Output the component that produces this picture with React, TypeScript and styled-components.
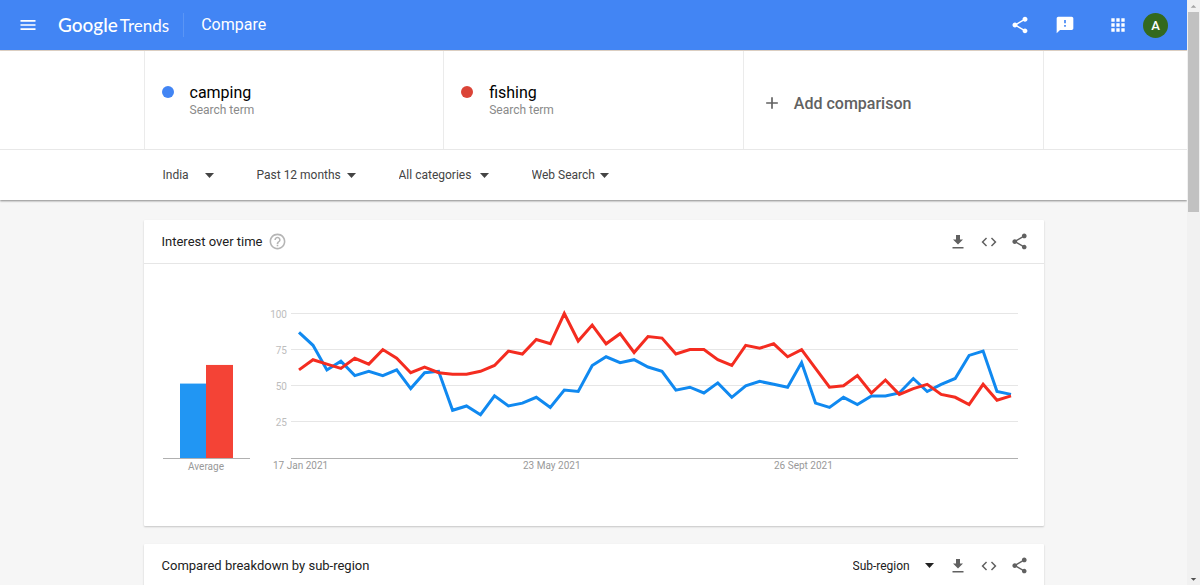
import React from "react";
import styled, { createGlobalStyle } from "styled-components";
import { MdMenu, MdShare, MdFeedback, MdApps, MdCode, MdHelpOutline, MdAdd } from "react-icons/md";

const GlobalStyle = createGlobalStyle`
  *, *::before, *::after { box-sizing: border-box; }
  body {
    margin: 0;
    background: #f6f6f6;
    color: #212121;
    font-family: Roboto, "Liberation Sans", sans-serif;
    font-size: 13px;
  }
  button, select { font: inherit; color: inherit; }
`;

const Shell = styled.div`
  display: flex;
  height: 100vh;
  overflow: hidden;
`;

const Page = styled.div`
  flex: 1;
  min-width: 0;
  overflow-y: auto;
  scrollbar-width: none;
`;

const ScrollTrack = styled.div`
  flex: 0 0 13px;
  display: flex;
  flex-direction: column;
  align-items: stretch;
  padding: 0 1px;
  background: #f1f1f1;
`;

const ScrollThumb = styled.div`
  height: 200px;
  background: #c1c1c1;
`;

const ScrollArrow = styled.svg<{ $end?: boolean }>`
  width: 11px;
  height: 12px;
  fill: ${(p) => (p.$end ? "#505050" : "#a3a3a3")};
  margin-top: ${(p) => (p.$end ? "auto" : "0")};
`;

const TopBar = styled.header`
  display: flex;
  align-items: center;
  height: 51px;
  padding: 0 19px 0 18px;
  background: #4285f4;
  border-bottom: 1px solid #e3d5c8;
  color: #fff;
`;

const IconButton = styled.button<{ $size: number }>`
  display: inline-flex;
  align-items: center;
  justify-content: center;
  width: ${(p) => p.$size}px;
  height: ${(p) => p.$size}px;
  padding: 0;
  border: 0;
  background: none;
  cursor: pointer;
`;

const Logo = styled.a`
  display: flex;
  align-items: baseline;
  gap: 2px;
  margin-left: 20px;
  color: #fff;
  font-family: Lato, sans-serif;
  font-size: 19px;
  line-height: 24px;
  text-decoration: none;
`;

const LogoBrand = styled.span`
  font-weight: 500;
`;

const LogoProduct = styled.span`
  font-size: 17px;
`;

const PageTitle = styled.h1`
  margin: 0 0 0 14px;
  padding: 0 0 0 17px;
  border-left: 1px solid #5a95f5;
  font-size: 16px;
  font-weight: 400;
  line-height: 24px;
`;

const TopActions = styled.div`
  display: flex;
  align-items: center;
  gap: 21px;
  margin-left: auto;
`;

const AppsGroup = styled.div`
  display: flex;
  align-items: center;
  gap: 13px;
  margin-left: 8px;
`;

const Avatar = styled.button`
  width: 25px;
  height: 25px;
  padding: 0;
  border: 0;
  border-radius: 50%;
  background: #33691e;
  color: #fff;
  font-size: 13px;
  font-weight: 500;
  line-height: 25px;
`;

const Controls = styled.section`
  background: #fff;
  box-shadow: 0 1px 2px rgba(0, 0, 0, 0.45);
`;

const Band = styled.div`
  border-bottom: 1px solid #e8e8e8;
`;

const Container = styled.div`
  width: 100%;
  max-width: 900px;
  margin: 0 auto;
`;

const Terms = styled(Container)`
  display: grid;
  grid-template-columns: repeat(3, 1fr);
  height: 98px;
  border-right: 1px solid #ebebeb;
`;

const Term = styled.div`
  display: grid;
  grid-template-columns: 12px 1fr;
  column-gap: 16px;
  align-content: start;
  align-items: center;
  padding: 30px 17px 0;
  border-left: 1px solid #ebebeb;
`;

const Dot = styled.span<{ $color: string }>`
  width: 12px;
  height: 12px;
  border-radius: 50%;
  background: ${(p) => p.$color};
`;

const TermName = styled.span`
  padding-top: 2px;
  color: #000;
  font-size: 16px;
  line-height: 20px;
`;

const TermKind = styled.span`
  grid-column: 2;
  color: #8a8a8a;
  font-size: 12px;
  line-height: 14px;
`;

const AddButton = styled.button`
  display: flex;
  align-items: center;
  gap: 12px;
  padding: 6px 18px 0;
  border: 0;
  border-left: 1px solid #ebebeb;
  background: none;
  color: #616161;
  font-size: 16px;
  font-weight: 500;
  cursor: pointer;
`;

const Filters = styled(Container)`
  display: flex;
  align-items: center;
  gap: 43px;
  height: 50px;
  padding: 0 19px;
  color: #444;
`;

const SelectBox = styled.label<{ $width: number }>`
  display: grid;
  grid-template-columns: 1fr 9px;
  align-items: center;
  width: ${(p) => p.$width}px;
  font-size: 12px;
`;

const Select = styled.select`
  grid-area: 1 / 1 / 2 / 3;
  width: 100%;
  height: 24px;
  padding: 0;
  border: 0;
  background: none;
  appearance: none;
`;

const Caret = styled.svg`
  grid-area: 1 / 2 / 2 / 3;
  width: 9px;
  height: 5px;
  fill: currentColor;
  pointer-events: none;
`;

const Cards = styled(Container).attrs({ as: "main" })`
  display: flex;
  flex-direction: column;
  gap: 18px;
  padding: 20px 0;
`;

const Card = styled.section`
  background: #fff;
  border-radius: 1px;
  box-shadow: 0 1px 2px rgba(0, 0, 0, 0.2);
`;

const CardHeader = styled.header`
  display: flex;
  align-items: center;
  height: 44px;
  padding: 0 14px 0 18px;
  border-bottom: 1px solid #e6e6e6;
`;

const CardTitle = styled.h2`
  margin: 0 5px 0 0;
  font-size: 13px;
  font-weight: 400;
  line-height: 20px;
`;

const CardActions = styled.div`
  display: flex;
  align-items: center;
  gap: 11px;
  margin-left: auto;
  color: #616161;
`;

const RegionSelect = styled.div`
  margin-right: 3px;
  color: #212121;
`;

const ChartBody = styled.div`
  display: flex;
  align-items: flex-start;
  padding: 40px 24px 54px 18px;
`;

const AverageChart = styled.svg`
  flex: 0 0 108px;
  width: 108px;
  height: 168px;
`;

const LineChart = styled.svg`
  flex: 1;
  min-width: 0;
  height: auto;
`;

const AxisText = styled.text<{ $tone?: string }>`
  font-size: 10px;
  fill: ${(p) => p.$tone ?? "#999"};
`;

const EmptyMap = styled.div`
  height: 320px;
`;

const camping = [
  87, 78, 61, 67, 57, 60, 57, 61, 48, 59, 60, 33, 36, 30, 43, 36, 38, 42, 35, 47, 46, 64, 70, 66, 68, 63, 60, 47, 49, 45,
  52, 42, 50, 53, 51, 49, 66, 38, 35, 42, 37, 43, 43, 45, 55, 46, 51, 55, 71, 74, 46, 44,
];
const fishing = [
  61, 68, 65, 62, 69, 65, 75, 69, 59, 63, 59, 58, 58, 60, 64, 74, 72, 82, 79, 100, 81, 92, 79, 86, 73, 84, 83, 72, 75, 75,
  68, 64, 78, 76, 79, 70, 75, 62, 49, 50, 57, 45, 54, 44, 48, 51, 44, 42, 37, 51, 40, 43,
];

const BASE = 154;
const SCALE = 1.445;
const yOf = (v: number) => BASE - v * SCALE;
const toPoints = (data: number[]) =>
  data.map((v, i) => `${(29 + (i * 712) / 51).toFixed(1)},${yOf(v).toFixed(1)}`).join(" ");

function DownloadIcon() {
  return (
    <svg width="12" height="14" viewBox="0 0 12 14" fill="currentColor" aria-hidden="true">
      <path d="M4 0h4v4.500h3L6 9.500 1 4.500h3zM0.500 12h11v1.500h-11z" />
    </svg>
  );
}

function Dropdown({ label, value, width }: { label: string; value: string; width: number }) {
  return (
    <SelectBox $width={width}>
      <Select aria-label={label} defaultValue={value}>
        <option>{value}</option>
      </Select>
      <Caret viewBox="0 0 9 5" aria-hidden="true">
        <path d="M0 0h9L4.500 5z" />
      </Caret>
    </SelectBox>
  );
}

function ExportButtons() {
  return (
    <>
      <IconButton $size={20} aria-label="Download CSV">
        <DownloadIcon />
      </IconButton>
      <IconButton $size={20} aria-label="Embed">
        <MdCode size={18} />
      </IconButton>
      <IconButton $size={20} aria-label="Share">
        <MdShare size={19} />
      </IconButton>
    </>
  );
}

export default function App() {
  return (
    <>
      <GlobalStyle />
      <Shell>
        <Page>
          <TopBar>
            <IconButton $size={20} aria-label="Main menu">
              <MdMenu size={20} />
            </IconButton>
            <Logo href="#">
              <LogoBrand>Google</LogoBrand>
              <LogoProduct>Trends</LogoProduct>
            </Logo>
            <PageTitle>Compare</PageTitle>
            <TopActions>
              <IconButton $size={24} aria-label="Share">
                <MdShare size={20} />
              </IconButton>
              <IconButton $size={24} aria-label="Send feedback">
                <MdFeedback size={20} />
              </IconButton>
              <AppsGroup>
                <IconButton $size={24} aria-label="Google apps">
                  <MdApps size={20} />
                </IconButton>
                <Avatar aria-label="Account">A</Avatar>
              </AppsGroup>
            </TopActions>
          </TopBar>

          <Controls>
            <Band>
              <Terms>
                <Term>
                  <Dot $color="#4285f4" />
                  <TermName>camping</TermName>
                  <TermKind>Search term</TermKind>
                </Term>
                <Term>
                  <Dot $color="#db4437" />
                  <TermName>fishing</TermName>
                  <TermKind>Search term</TermKind>
                </Term>
                <AddButton>
                  <MdAdd size={20} />
                  Add comparison
                </AddButton>
              </Terms>
            </Band>
            <Filters>
              <Dropdown label="Region" value="India" width={51} />
              <Dropdown label="Time range" value="Past 12 months" width={99} />
              <Dropdown label="Category" value="All categories" width={90} />
              <Dropdown label="Search type" value="Web Search" width={77} />
            </Filters>
          </Controls>

          <Cards>
            <Card>
              <CardHeader>
                <CardTitle>Interest over time</CardTitle>
                <IconButton $size={20} aria-label="Help">
                  <MdHelpOutline size={19} color="#b5b5b5" />
                </IconButton>
                <CardActions>
                  <ExportButtons />
                </CardActions>
              </CardHeader>
              <ChartBody>
                <AverageChart viewBox="0 0 108 168" role="img" aria-label="Average interest">
                  <rect x="18" y={yOf(51.5)} width="26" height={51.5 * SCALE} fill="#2196f3" />
                  <rect x="44" y={yOf(64.4)} width="27" height={64.4 * SCALE} fill="#f44336" />
                  <path d="M1 154.500H88" stroke="#b0b0b0" />
                  <AxisText x="44" y="166" textAnchor="middle">
                    Average
                  </AxisText>
                </AverageChart>
                <LineChart viewBox="0 0 750 168" role="img" aria-label="Interest over time">
                  {[25, 50, 75, 100].map((v) => (
                    <g key={v}>
                      <path d={`M21 ${Math.floor(yOf(v)) + 0.5}H748`} stroke="#e6e6e6" />
                      <AxisText x="17" y={Math.round(yOf(v)) + 4} textAnchor="end" $tone="#bdbdbd">
                        {v}
                      </AxisText>
                    </g>
                  ))}
                  <path d="M21 154.500H748" stroke="#b0b0b0" />
                  <polyline points={toPoints(camping)} fill="none" stroke="#1089f0" strokeWidth="3" />
                  <polyline points={toPoints(fishing)} fill="none" stroke="#f42c20" strokeWidth="3" />
                  <AxisText x="3" y="165">
                    17 Jan 2021
                  </AxisText>
                  <AxisText x="253" y="165">
                    23 May 2021
                  </AxisText>
                  <AxisText x="504" y="165">
                    26 Sept 2021
                  </AxisText>
                </LineChart>
              </ChartBody>
            </Card>

            <Card>
              <CardHeader>
                <CardTitle>Compared breakdown by sub-region</CardTitle>
                <CardActions>
                  <RegionSelect>
                    <Dropdown label="Resolution" value="Sub-region" width={81} />
                  </RegionSelect>
                  <ExportButtons />
                </CardActions>
              </CardHeader>
              <EmptyMap />
            </Card>
          </Cards>
        </Page>
        <ScrollTrack aria-hidden="true">
          <ScrollArrow viewBox="0 0 12 12">
            <path d="M3 8l3-3 3 3z" />
          </ScrollArrow>
          <ScrollThumb />
          <ScrollArrow $end viewBox="0 0 12 12">
            <path d="M3 5h6L6 8z" />
          </ScrollArrow>
        </ScrollTrack>
      </Shell>
    </>
  );
}
